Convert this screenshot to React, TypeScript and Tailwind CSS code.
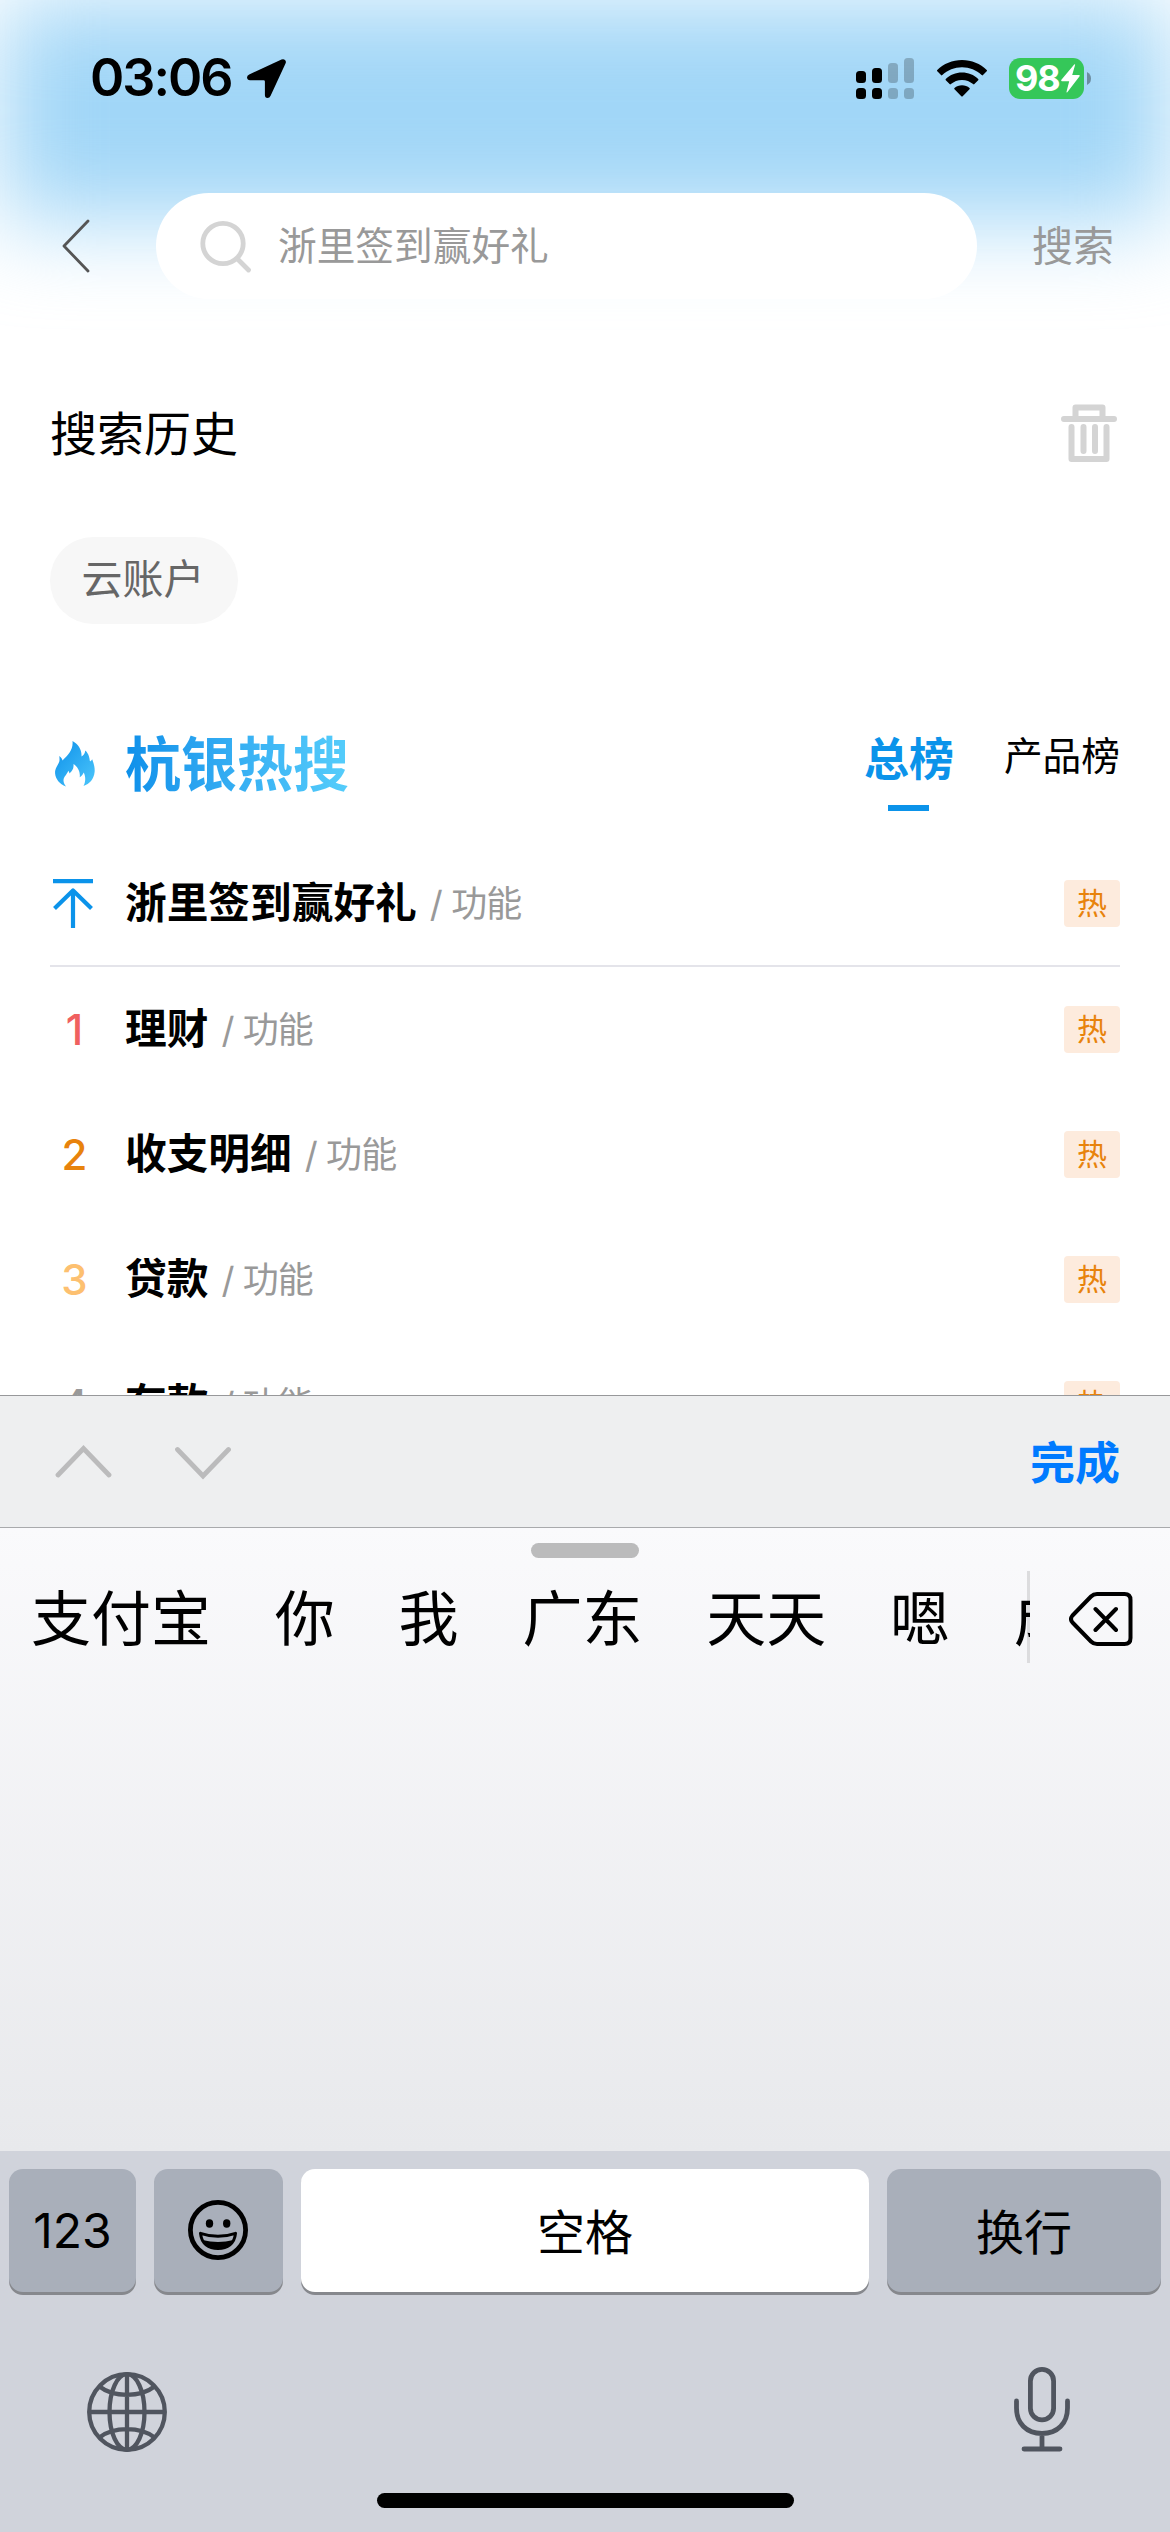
/**
 * Search page — history, hot ranking and the pinyin keyboard
 */

interface HotItem {
  rank: string;
  rankColor: string;
  title: string;
  kind: string;
}

const HOT_ITEMS: HotItem[] = [
  { rank: "top", rankColor: "", title: "浙里签到赢好礼", kind: "功能" },
  { rank: "1", rankColor: "text-[#f0605f]", title: "理财", kind: "功能" },
  { rank: "2", rankColor: "text-[#e8830c]", title: "收支明细", kind: "功能" },
  { rank: "3", rankColor: "text-[#fdc070]", title: "贷款", kind: "功能" },
  { rank: "4", rankColor: "text-[#999999]", title: "存款", kind: "功能" },
];

const CANDIDATES = ["支付宝", "你", "我", "广东", "天天", "嗯", "成"];

function SignalIcon() {
  return (
    <svg width="58" height="41" viewBox="0 0 58 41">
      <rect x="0" y="13" width="10" height="12" rx="3.5" />
      <rect x="16" y="10" width="10" height="15" rx="3.5" />
      <rect x="0" y="30" width="10" height="11" rx="3.5" />
      <rect x="16" y="30" width="10" height="11" rx="3.5" />
      <g fillOpacity="0.22">
        <rect x="32" y="5" width="10" height="20" rx="3.5" />
        <rect x="48" y="0" width="10" height="25" rx="3.5" />
        <rect x="32" y="30" width="10" height="11" rx="3.5" />
        <rect x="48" y="30" width="10" height="11" rx="3.5" />
      </g>
    </svg>
  );
}

function WifiIcon() {
  return (
    <svg width="50" height="37" viewBox="0 0 50 37">
      <path d="M25 0C34.500 0 43.500 3.700 49.700 10Q50.300 10.700 49.700 11.300L46 15.100Q45.400 15.700 44.700 15.100C39.500 10.100 32.500 7.300 25 7.300S10.500 10.100 5.300 15.100Q4.600 15.700 4 15.100L.3 11.300Q-.3 10.700 .3 10C6.500 3.700 15.500 0 25 0Z" />
      <path d="M25 12.600C31.200 12.600 37 15 41.200 19Q41.800 19.600 41.200 20.300L37.400 24.100Q36.800 24.700 36.100 24.100C33.100 21.400 29.200 19.900 25 19.900S16.900 21.400 13.900 24.100Q13.200 24.700 12.600 24.100L8.800 20.300Q8.200 19.600 8.800 19C13 15 18.800 12.600 25 12.600Z" />
      <path d="M25 25.200C27.800 25.200 30.500 26.200 32.500 28Q33.200 28.600 32.500 29.300L25.700 36.200Q25 36.900 24.300 36.200L17.500 29.300Q16.800 28.600 17.500 28C19.500 26.200 22.200 25.200 25 25.200Z" />
    </svg>
  );
}

function StatusBar() {
  return (
    <div className="flex h-[156px] shrink-0 items-center pr-[79px] pl-[90px]">
      <span className="w-[144px] text-[52px] leading-none font-semibold tracking-[-2px] whitespace-nowrap">03:06</span>
      <svg className="ml-[13px]" width="39" height="39" viewBox="0 0 39 39">
        <path d="M34.500 .6Q36.500 -.4 38 1.100T38.500 4.600L23.600 36.800Q22.600 39 20.500 39Q17.900 38.800 17.900 36V22.400Q17.900 21.200 16.700 21.200H3Q.2 21.100 0 18.600Q0 16.600 2.200 15.500Z" />
      </svg>
      <div className="ml-auto flex items-center">
        <SignalIcon />
        <div className="ml-[23px]">
          <WifiIcon />
        </div>
        <div className="ml-[22px] flex h-[41px] w-[75px] items-center rounded-[11px] bg-[#35c759] pl-[6px] text-white">
          <span className="w-[45px] text-[36px] leading-none font-bold tracking-[-1.200px]">98</span>
          <svg className="ml-px" width="19" height="29" viewBox="0 0 19 29" fill="currentColor">
            <path d="M13.200 .5Q14.500 -.5 14 1.200L11.200 11H17.800Q19.400 11.100 18.400 12.500L6.500 28Q5.200 29.300 5.600 27.400L8.200 17.200H1Q-.3 17.100 .4 15.800Z" />
          </svg>
        </div>
        <svg className="ml-[3px]" width="4" height="13" viewBox="0 0 4 13">
          <path d="M0 0Q4 2 4 6.500T0 13Z" fillOpacity="0.35" />
        </svg>
      </div>
    </div>
  );
}

function SearchHeader() {
  return (
    <div className="mt-[37px] flex h-[106px] shrink-0 items-center">
      <svg className="ml-[62px]" width="28" height="54" viewBox="0 0 28 54" fill="none" stroke="#555" strokeWidth="2.800" strokeLinecap="round" strokeLinejoin="round">
        <path d="M26 2L2 27L26 52" />
      </svg>
      <div className="ml-[66px] flex h-full w-[821px] items-center rounded-full bg-white pl-[44px]">
        <svg width="53" height="53" viewBox="0 0 53 53" fill="none" stroke="#d4d4d4" strokeWidth="4.800" strokeLinecap="round">
          <circle cx="23" cy="23.500" r="20.200" />
          <path d="M38.500 40L48.500 50" />
        </svg>
        <span className="ml-[25px] text-[38.700px] leading-none text-[#999999]">浙里签到赢好礼</span>
      </div>
      <span className="ml-[55px] text-[41px] leading-none text-[#999999]">搜索</span>
    </div>
  );
}

function TrashIcon() {
  return (
    <svg width="56" height="58" viewBox="0 0 56 58" fill="none" stroke="#d4d4d4" strokeWidth="6" strokeLinecap="round" strokeLinejoin="round">
      <path d="M3 15H53M14.500 14V3.500H41.500V14M10.500 23V55H45.500V23M22.500 23V47M34 23V47" />
    </svg>
  );
}

function FlameIcon() {
  return (
    <svg width="40" height="46" viewBox="0 0 40 46">
      <defs>
        <linearGradient id="flame" x1="0" y1="0" x2="1" y2="1">
          <stop offset="0" stopColor="#0d90ea" />
          <stop offset="1" stopColor="#4cc6fb" />
        </linearGradient>
      </defs>
      <path
        fill="url(#flame)"
        d="M17.500 0C23 3 27 8.500 26.500 15.500C28.500 14.500 30 12.500 30.300 9.500C34 13 34.500 17 35 20.500C36 20 36.800 19.300 37.200 18.300C39 23 40 27 39.600 31C39 38 34.500 43 28.500 45C30.500 41 31 36 28.700 31.500C27.500 34 26.300 35.500 24.700 36.300C25.500 31 23 26 18.500 23C19 28.500 16.500 30.500 14.500 32.500C14.300 31.500 14 30.500 13.200 29.700C12.500 33 8.500 35.500 8.500 39.500C8.500 41.700 9.500 43.500 11 45.500C4.500 43 .5 38 .1 32.500C-.3 27.500 3 24.500 4.300 20.500C4.700 18.500 4.500 17 4.300 15C6 16.200 7 17.500 7.500 19.500C13 14 18.500 8.500 17.500 0Z"
      />
    </svg>
  );
}

function TopIcon() {
  return (
    <svg width="40" height="49" viewBox="0 0 40 49" fill="none" stroke="#0b93ea" strokeWidth="4.200" strokeLinejoin="round">
      <path d="M0 2.100H40M20 11V49M1.500 29.500L20 11.500L38.500 29.500" />
    </svg>
  );
}

function HotRow({ item }: { item: HotItem }) {
  const pinned = item.rank === "top";
  return (
    <div className={pinned ? "flex h-[125px] shrink-0 items-center border-b-2 border-[#e4e4ea]" : "flex h-[125px] shrink-0 items-center"}>
      <div className={pinned ? "flex w-[46px] justify-center" : "flex w-[49px] justify-center"}>
        {pinned ? <TopIcon /> : <span className={`text-[42px] leading-none font-medium ${item.rankColor}`}>{item.rank}</span>}
      </div>
      <span className={pinned ? "ml-[29px] text-[41.700px] leading-none font-bold" : "ml-[26px] text-[41.700px] leading-none font-bold"}>{item.title}</span>
      <span className="ml-[13px] text-[36px] leading-none tracking-[-0.900px] text-[#999999]">/ {item.kind}</span>
      <span className="ml-auto flex h-[47px] w-[56px] items-center justify-center rounded-[4px] bg-[#fdebdd] pb-[2px] text-[30px] leading-none text-[#e8830c]">
        热
      </span>
    </div>
  );
}

function AccessoryBar() {
  return (
    <div className="flex h-[133px] items-center border-t border-b border-t-[#97989a] border-b-[#a9aaac] bg-[#eeeff0] pr-[50px] pl-[55px]">
      <svg width="176" height="36" viewBox="0 0 176 36" fill="none" stroke="#bbbbbc" strokeWidth="4.800" strokeLinecap="round" strokeLinejoin="miter">
        <path d="M3 31L28.500 4.500L54 31M122.500 5.500L148 32L173.500 5.500" />
      </svg>
      <span className="mt-[3px] ml-auto text-[45px] leading-none font-bold text-[#007aff]">完成</span>
    </div>
  );
}

function CandidatePanel() {
  return (
    <div className="flex h-[623px] flex-col bg-linear-to-b from-[#fafafc] to-[#e8e9ec]">
      <div className="mx-auto mt-[15px] h-[15px] w-[108px] shrink-0 rounded-full bg-[#bbbbbc]" />
      <div className="mt-[13px] flex h-[92px] items-center">
        <div className="flex h-full w-[1030px] items-center gap-[63.800px] overflow-hidden pt-[3px] pl-[31px] text-[60px] leading-none whitespace-nowrap shadow-[inset_-3px_0_0_#dcdcde]">
          {CANDIDATES.map((word) => (
            <span key={word}>{word}</span>
          ))}
        </div>
        <svg className="mt-[3px] ml-[39px]" width="65" height="56" viewBox="0 0 65 56" fill="none" stroke="#000" strokeWidth="4" strokeLinecap="round" strokeLinejoin="round">
          <path d="M28 3H55.500Q61.500 3 61.500 9V47Q61.500 53 55.500 53H28Q24.500 53 22 50.500L3.500 31.500Q.5 28 3.500 24.500L22 5.500Q24.500 3 28 3ZM26.500 18L47 39M47 18L26.500 39" />
        </svg>
      </div>
    </div>
  );
}

function EmojiIcon() {
  return (
    <svg width="60" height="60" viewBox="0 0 60 60">
      <circle cx="30" cy="30" r="27.600" fill="none" stroke="#000" strokeWidth="4.800" />
      <ellipse cx="21.500" cy="23.500" rx="3.700" ry="4.200" />
      <ellipse cx="38.700" cy="23.500" rx="3.700" ry="4.200" />
      <path d="M12.500 33.300Q30 39.300 47.500 33.300C46.500 43.500 39.500 48.500 30 48.500S13.500 43.500 12.500 33.300Z" fill="none" stroke="#000" strokeWidth="3" strokeLinejoin="round" />
      <path d="M14.500 40Q30 44 45.500 40Q41.500 48.500 30 48.500T14.500 40Z" />
    </svg>
  );
}

function GlobeIcon() {
  return (
    <svg width="80" height="80" viewBox="0 0 80 80" fill="none" stroke="#50555f" strokeWidth="4.300">
      <circle cx="40" cy="40" r="37.800" />
      <ellipse cx="40" cy="40" rx="17.500" ry="37.800" />
      <path d="M40 2V78M2 40H78M12.500 14.500Q23 22.800 40 22.800T67.500 14.500M12.500 65.500Q23 57.200 40 57.200T67.500 65.500" />
    </svg>
  );
}

function MicIcon() {
  return (
    <svg width="56" height="85" viewBox="0 0 56 85" fill="none" stroke="#50555f" strokeWidth="4.800" strokeLinecap="round">
      <rect x="16.400" y="2.400" width="23.200" height="50.500" rx="11.600" />
      <path d="M2.500 34V41C2.500 56.500 12.500 66.500 28 66.500S53.500 56.500 53.500 41V34M28 67V82M10 82H46" />
    </svg>
  );
}

function Keyboard() {
  return (
    <div className="flex h-[381px] flex-col bg-[#d0d3db] pt-[18px]">
      <div className="flex h-[123px] shrink-0 gap-[18px] px-[9px] text-[48px] leading-none">
        <div className="flex w-[127px] items-center justify-center rounded-[14px] bg-[#a9afba] shadow-[0_3px_0_#86888d]">
          <span>123</span>
        </div>
        <div className="flex w-[129px] items-center justify-center rounded-[14px] bg-[#a9afba] pb-px pr-px shadow-[0_3px_0_#86888d]">
          <EmojiIcon />
        </div>
        <div className="flex w-[568px] items-center justify-center rounded-[14px] bg-white pt-[5px] shadow-[0_3px_0_#86888d]">空格</div>
        <div className="flex flex-1 items-center justify-center rounded-[14px] bg-[#a9afba] pt-[5px] shadow-[0_3px_0_#86888d]">换行</div>
      </div>
      <div className="mt-[74px] flex items-center justify-between pr-[100px] pl-[87px]">
        <div className="pt-[6px]">
          <GlobeIcon />
        </div>
        <MicIcon />
      </div>
      <div className="mx-auto mt-auto mb-[24px] h-[15px] w-[417px] rounded-full bg-black" />
    </div>
  );
}

export default function App() {
  return (
    <div className="relative flex h-[2532px] w-[1170px] flex-col overflow-hidden bg-white font-['Inter','Noto_Sans_CJK_SC',sans-serif] text-black">
      {/* soft blue glow behind the status bar and search field */}
      <div className="absolute top-0 left-0 h-[220px] w-[1170px] bg-[#a1d6f7] blur-[46px]" />

      <div className="relative flex h-[1395px] shrink-0 flex-col overflow-hidden">
        <StatusBar />
        <SearchHeader />

        <div className="mt-[105px] flex h-[58px] shrink-0 items-center justify-between pr-[53px] pl-[50px]">
          <h2 className="text-[47px] leading-none">搜索历史</h2>
          <TrashIcon />
        </div>
        <div className="mt-[75px] flex shrink-0 px-[50px]">
          <span className="flex h-[87px] w-[188px] items-center justify-center rounded-full bg-[#f7f7f7] pr-[2px] pb-[2px] text-[41px] leading-none text-[#666666]">
            云账户
          </span>
        </div>

        <div className="mt-[113px] flex h-[74px] shrink-0 items-start pr-[50px] pl-[55px]">
          <div className="mt-[4px]">
            <FlameIcon />
          </div>
          <h2 className="ml-[30px] origin-center scale-y-[1.06] bg-linear-to-r from-[#0d90ea] to-[#55cdfb] bg-clip-text text-[56px] leading-[56px] font-bold text-transparent">
            杭银热搜
          </h2>
          <div className="ml-auto flex flex-col items-center">
            <span className="text-[45px] leading-[46px] font-bold text-[#0b93ea]">总榜</span>
            <div className="mt-[22px] h-[6px] w-[41px] bg-[#0b93ea]" />
          </div>
          <span className="ml-[50px] text-[38.700px] leading-[39px]">产品榜</span>
        </div>

        <div className="mt-[31px] flex flex-col px-[50px]">
          {HOT_ITEMS.map((item) => (
            <HotRow key={item.rank} item={item} />
          ))}
        </div>
      </div>

      <div className="relative flex flex-col">
        <AccessoryBar />
        <CandidatePanel />
        <Keyboard />
      </div>
    </div>
  );
}
